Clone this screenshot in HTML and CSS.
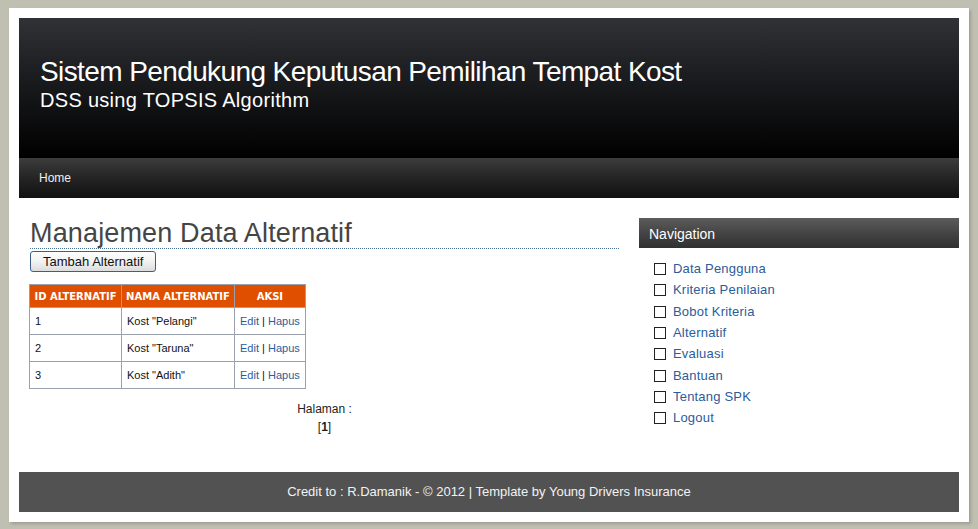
FILE: index.html
```html
<!DOCTYPE html>
<html>
<head>
<meta charset="utf-8">
<title>SPK Pemilihan Tempat Kost</title>
<link rel="stylesheet" href="styles.css">
</head>
<body>
<div class="page">
  <div class="header">
    <h1 class="site-title">Sistem Pendukung Keputusan Pemilihan Tempat Kost</h1>
    <div class="site-sub">DSS using TOPSIS Algorithm</div>
  </div>
  <div class="menu"><a class="menu-link" href="#">Home</a></div>
  <div class="content">
    <div class="main">
      <h2 class="page-title">Manajemen Data Alternatif</h2>
      <button class="btn">Tambah Alternatif</button>
      <table class="data">
        <thead>
          <tr><th class="c1">ID ALTERNATIF</th><th class="c2">NAMA ALTERNATIF</th><th class="c3">AKSI</th></tr>
        </thead>
        <tbody>
          <tr><td>1</td><td>Kost "Pelangi"</td><td><a href="#">Edit</a> | <a href="#">Hapus</a></td></tr>
          <tr><td>2</td><td>Kost "Taruna"</td><td><a href="#">Edit</a> | <a href="#">Hapus</a></td></tr>
          <tr><td>3</td><td>Kost "Adith"</td><td><a href="#">Edit</a> | <a href="#">Hapus</a></td></tr>
        </tbody>
      </table>
      <div class="pager">
        <div>Halaman :</div>
        <div>[<b>1</b>]</div>
      </div>
    </div>
    <div class="side">
      <div class="side-title">Navigation</div>
      <ul class="side-list">
        <li><span class="box"></span><a href="#">Data Pengguna</a></li>
        <li><span class="box"></span><a href="#">Kriteria Penilaian</a></li>
        <li><span class="box"></span><a href="#">Bobot Kriteria</a></li>
        <li><span class="box"></span><a href="#">Alternatif</a></li>
        <li><span class="box"></span><a href="#">Evaluasi</a></li>
        <li><span class="box"></span><a href="#">Bantuan</a></li>
        <li><span class="box"></span><a href="#">Tentang SPK</a></li>
        <li><span class="box"></span><a href="#">Logout</a></li>
      </ul>
    </div>
  </div>
  <div class="footer">Credit to : R.Damanik - © 2012 | Template by Young Drivers Insurance</div>
</div>
</body>
</html>
```
FILE: styles.css
```css
html, body {
  margin: 0;
  padding: 0;
}
body {
  background: #bfc0b1;
  font-family: "Liberation Sans", Arial, sans-serif;
  height: 529px;
  overflow: hidden;
}
.page {
  margin: 8px 0 0 9px;
  width: 940px;
  padding: 10px;
  background: #fff;
  box-shadow: 2px 2px 3px rgba(0,0,0,0.18);
}
.header {
  height: 140px;
  box-sizing: border-box;
  padding: 38px 0 0 21px;
  background: linear-gradient(to bottom, #303236 0%, #1c1d20 40%, #000 100%);
  color: #fff;
}
.site-title {
  margin: 0;
  font-size: 28px;
  line-height: 32px;
  font-weight: normal;
  letter-spacing: -0.6px;
}
.site-sub {
  margin-top: 1px;
  font-size: 20px;
  line-height: 23px;
  letter-spacing: 0.3px;
}
.menu {
  height: 40px;
  background: linear-gradient(to bottom, #3c3c3c 0%, #242424 50%, #111 100%);
  display: flex;
  align-items: center;
  padding-left: 20px;
}
.menu-link {
  color: #f0f0f0;
  text-decoration: none;
  font-size: 12px;
}
.content {
  display: flex;
  gap: 20px;
  height: 274px;
  box-sizing: border-box;
  padding: 20px 0 0 11px;
}
.main {
  width: 589px;
}
.page-title {
  margin: 0;
  font-size: 27px;
  line-height: 30px;
  font-weight: normal;
  color: #454545;
  letter-spacing: 0.15px;
  border-bottom: 1px dotted #4a6f9a;
}
.btn {
  display: block;
  margin-top: 2px;
  height: 21px;
  padding: 0 12px;
  font-family: "Liberation Sans", Arial, sans-serif;
  font-size: 13px;
  color: #111;
  border: 1px solid #3b5f8c;
  border-radius: 3px;
  background: linear-gradient(to bottom, #ffffff 0%, #f2f2f2 50%, #dcdcdc 100%);
}
.data {
  margin-top: 12px;
  margin-left: -1px;
  border-collapse: collapse;
  font-size: 11px;
}
.data th {
  background: #e04f00;
  color: #fff;
  font-family: "DejaVu Sans", Verdana, sans-serif;
  font-size: 10px;
  font-weight: bold;
  height: 22px;
  padding: 0;
  border: 1px solid #9aa0ac;
  text-align: center;
  white-space: nowrap;
}
.data .c1 { width: 91px; }
.data .c2 { width: 112px; }
.data .c3 { width: 68px; }
.data td {
  border: 1px solid #9aa0ac;
  height: 26px;
  padding: 0 5px;
  color: #111;
  white-space: nowrap;
}
.data a {
  color: #2a5d9c;
  text-decoration: none;
}
.pager {
  text-align: center;
  font-size: 12px;
  color: #222;
  margin-top: 11px;
  line-height: 18px;
}
.side {
  width: 320px;
}
.side-title {
  height: 30px;
  line-height: 32px;
  padding-left: 10px;
  background: linear-gradient(to bottom, #5c5c5c 0%, #444 50%, #303030 100%);
  color: #fff;
  font-size: 14px;
}
.side-list {
  list-style: none;
  margin: 10px 0 0 0;
  padding: 0 0 0 15px;
}
.side-list li {
  display: flex;
  align-items: center;
  height: 21.3px;
  font-size: 13px;
}
.box {
  width: 10px;
  height: 10px;
  border: 1px solid #222;
  margin-right: 7px;
  margin-top: 1px;
}
.side-list a {
  color: #2b5c9b;
  text-decoration: none;
  letter-spacing: 0.2px;
}
.footer {
  height: 40px;
  line-height: 40px;
  margin-top: 0;
  background: #525252;
  color: #f2f2f2;
  font-size: 13px;
  text-align: center;
}
```
